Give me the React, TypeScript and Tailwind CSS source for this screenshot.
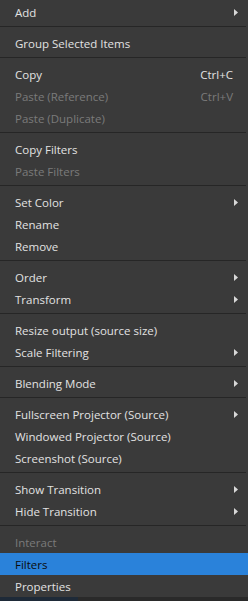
type Item =
  | { sep: true }
  | { label: string; shortcut?: string; sub?: boolean; disabled?: boolean; active?: boolean };

const items: Item[] = [
  { label: "Add", sub: true },
  { sep: true },
  { label: "Group Selected Items" },
  { sep: true },
  { label: "Copy", shortcut: "Ctrl+C" },
  { label: "Paste (Reference)", shortcut: "Ctrl+V", disabled: true },
  { label: "Paste (Duplicate)", disabled: true },
  { sep: true },
  { label: "Copy Filters" },
  { label: "Paste Filters", disabled: true },
  { sep: true },
  { label: "Set Color", sub: true },
  { label: "Rename" },
  { label: "Remove" },
  { sep: true },
  { label: "Order", sub: true },
  { label: "Transform", sub: true },
  { sep: true },
  { label: "Resize output (source size)" },
  { label: "Scale Filtering", sub: true },
  { sep: true },
  { label: "Blending Mode", sub: true },
  { sep: true },
  { label: "Fullscreen Projector (Source)", sub: true },
  { label: "Windowed Projector (Source)" },
  { label: "Screenshot (Source)" },
  { sep: true },
  { label: "Show Transition", sub: true },
  { label: "Hide Transition", sub: true },
  { sep: true },
  { label: "Interact", disabled: true },
  { label: "Filters", active: true },
  { label: "Properties" },
];

function Arrow() {
  return (
    <svg width="4" height="7" viewBox="0 0 4 7" className="absolute right-[10px] top-[8px]">
      <path d="M0 0 L4 3.5 L0 7 Z" fill="#d8d8d8" />
    </svg>
  );
}

export default function App() {
  return (
    <div
      className="w-[248px] h-[601px] overflow-hidden bg-[#3a3a3a] text-[11.5px]"
      style={{ fontFamily: '"Segoe UI", "Open Sans", "Noto Sans", sans-serif' }}
    >
      <div className="pt-[1px] flex flex-col">
        {items.map((it, i) =>
          "sep" in it ? (
            <div key={i} className="h-[9px] flex flex-col pt-[3px]">
              <div className="h-[1px] bg-[#262626] mr-[2px]" />
            </div>
          ) : (
            <div
              key={i}
              className={`relative h-[22px] flex items-center pl-[15px] pr-[15px] pt-[2px] ${
                it.active ? "bg-[#2a82da] text-[#0c0c0c]" : it.disabled ? "text-[#7a7a7a]" : "text-[#e2e2e2]"
              }`}
            >
              <span className="flex-1 leading-none">{it.label}</span>
              {it.shortcut && <span className="leading-none">{it.shortcut}</span>}
              {it.sub && <Arrow />}
            </div>
          )
        )}
      </div>
      <div className="h-[4px] flex">
        <div className="w-[78px] bg-[#1e2a38]" />
        <div className="flex-1 bg-[#2a2a2a]" />
      </div>
    </div>
  );
}
